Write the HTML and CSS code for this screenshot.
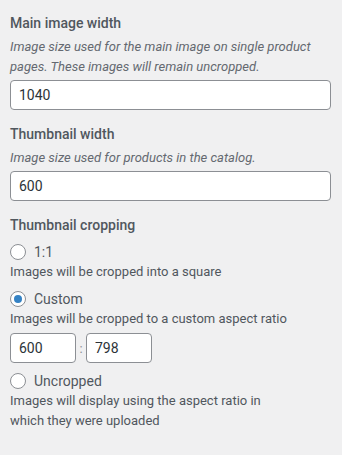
FILE: index.html
```html
<!DOCTYPE html>
<html>
  <head>
    <title>Product Images</title>
    <link rel="stylesheet" href="styles.css">
  </head>
  <body>
    <div class="panel">
        <div class="control">
            <div class="title">Main image width</div>
            <div class="desc">Image size used for the main image on single product pages. These images will remain uncropped.</div>
            <input type="text" class="field" value="1040"/>
        </div>
        <div class="control">
            <div class="title">Thumbnail width</div>
            <div class="desc">Image size used for products in the catalog.</div>
            <input type="text" class="field" value="600"/>
        </div>
        <div class="control">
            <div class="title">Thumbnail cropping</div>
            <label class="option"><span class="radio"></span>1:1</label>
            <div class="note">Images will be cropped into a square</div>
            <label class="option"><span class="radio checked"></span>Custom</label>
            <div class="note">Images will be cropped to a custom aspect ratio</div>
            <div class="ratio">
                <input type="text" class="small" value="600"/>
                <span class="sep">:</span>
                <input type="text" class="small" value="798"/>
            </div>
            <label class="option wide"><span class="radio"></span>Uncropped</label>
            <div class="note narrow">Images will display using the aspect ratio in which they were uploaded</div>
        </div>
    </div>
  </body>
</html>
```

FILE: styles.css
```css
body{
    margin:0;
    background:#f0f0f1;
    font-family: Roboto, "Liberation Sans", sans-serif;
    color:#50575e;
}

.panel{
    padding:13px 11px 0 10px;
}

.control{
    margin-bottom:14px;
}

.title{
    font-size:14px;
    font-weight:500;
    line-height:20px;
    margin-bottom:4px;
}

.desc{
    font-size:13px;
    font-style:italic;
    line-height:20px;
    color:#646970;
    margin-bottom:3px;
}

.field,
.small{
    display:block;
    width:100%;
    height:30px;
    box-sizing:border-box;
    padding:0 8px;
    border:1px solid #8c8f94;
    border-radius:4px;
    background:#fff;
    font-family: Roboto, "Liberation Sans", sans-serif;
    font-size:14px;
    color:#2c3338;
}

.option{
    display:flex;
    align-items:center;
    gap:8px;
    margin-top:7px;
    font-size:14px;
    line-height:20px;
}
.option.wide{
    margin-top:8px;
}

.radio{
    width:16px;
    height:16px;
    box-sizing:border-box;
    border:1px solid #8c8f94;
    border-radius:50%;
    background:#fff;
    display:flex;
    align-items:center;
    justify-content:center;
}
.radio.checked::before{
    content:"";
    width:8px;
    height:8px;
    border-radius:50%;
    background:#3582c4;
}

.note{
    font-size:13px;
    line-height:20px;
}
.note.narrow{
    max-width:270px;
}

.ratio{
    display:flex;
    align-items:center;
    margin-top:4px;
}
.ratio .small{
    width:66px;
}
.sep{
    width:10px;
    text-align:center;
    font-size:13px;
    color:#8c8f94;
}
```
